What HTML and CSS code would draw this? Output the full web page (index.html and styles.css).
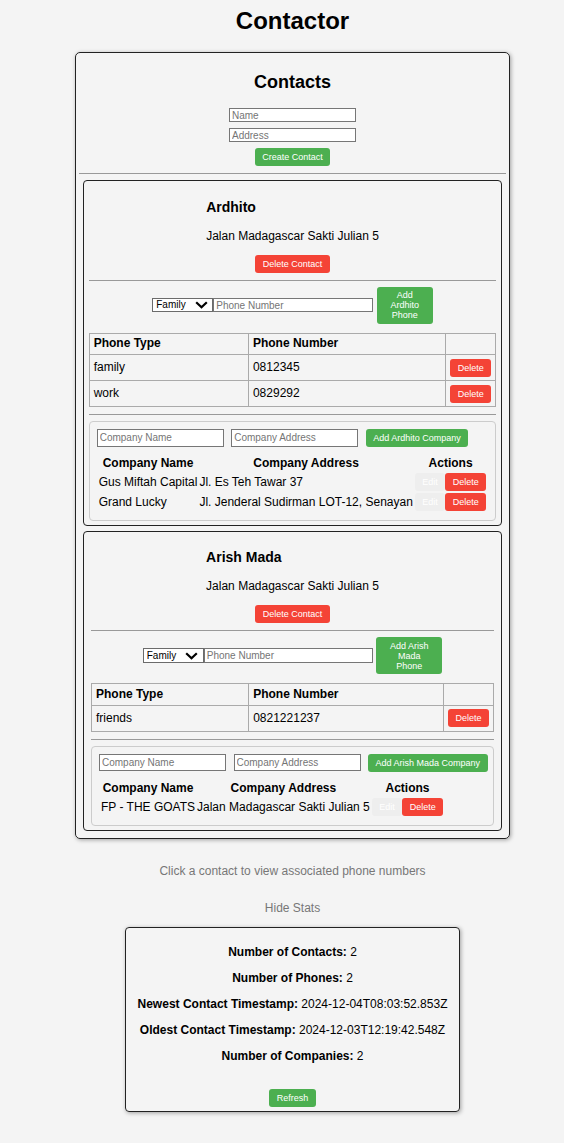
FILE: index.html
```html
<!DOCTYPE html>
<html lang="en">
<head>
<meta charset="utf-8">
<title>Contactor</title>
<link rel="stylesheet" href="styles.css">
</head>
<body>
<div class="app">
  <h1 class="title">Contactor</h1>

  <div class="panel">
    <h2 class="panel-title">Contacts</h2>
    <div class="create-form">
      <input class="field" type="text" placeholder="Name">
      <input class="field" type="text" placeholder="Address">
      <button class="btn btn-green">Create Contact</button>
    </div>
    <hr class="rule">

    <div class="contact-list">
      <div class="card">
        <div class="card-body">
          <div class="info">
            <h3 class="name">Ardhito</h3>
            <p class="address">Jalan Madagascar Sakti Julian 5</p>
          </div>
          <button class="btn btn-red btn-block">Delete Contact</button>
          <hr class="rule">
          <div class="phone-form phone-form-narrow">
            <span class="select-wrap">
              <select class="type-select"><option>Family</option><option>Work</option><option>Friends</option></select>
              <svg class="chevron" width="13" height="8" viewBox="0 0 13 8"><path d="M1.2 1.2 L6.5 6.3 L11.8 1.2" fill="none" stroke="#000" stroke-width="2.2"/></svg>
            </span>
            <input class="field phone-field" type="text" placeholder="Phone Number">
            <button class="btn btn-green phone-add">Add Ardhito Phone</button>
          </div>
          <table class="phones">
            <thead>
              <tr><th>Phone Type</th><th>Phone Number</th><th class="action-col"></th></tr>
            </thead>
            <tbody>
              <tr><td>family</td><td>0812345</td><td class="action-col"><button class="btn btn-red">Delete</button></td></tr>
              <tr><td>work</td><td>0829292</td><td class="action-col"><button class="btn btn-red">Delete</button></td></tr>
            </tbody>
          </table>
          <hr class="rule">
          <div class="companies">
            <div class="company-form">
              <input class="field company-field" type="text" placeholder="Company Name">
              <input class="field company-field" type="text" placeholder="Company Address">
              <button class="btn btn-green nowrap">Add Ardhito Company</button>
            </div>
            <table class="company-table">
              <thead>
                <tr><th>Company Name</th><th>Company Address</th><th>Actions</th></tr>
              </thead>
              <tbody>
                <tr><td>Gus Miftah Capital</td><td>Jl. Es Teh Tawar 37</td><td><div class="btn-pair"><button class="btn btn-muted">Edit</button><button class="btn btn-red">Delete</button></div></td></tr>
                <tr><td>Grand Lucky</td><td>Jl. Jenderal Sudirman LOT-12, Senayan</td><td><div class="btn-pair"><button class="btn btn-muted">Edit</button><button class="btn btn-red">Delete</button></div></td></tr>
              </tbody>
            </table>
          </div>
        </div>
      </div>

      <div class="card">
        <div class="card-body">
          <div class="info">
            <h3 class="name">Arish Mada</h3>
            <p class="address">Jalan Madagascar Sakti Julian 5</p>
          </div>
          <button class="btn btn-red btn-block">Delete Contact</button>
          <hr class="rule">
          <div class="phone-form phone-form-wide">
            <span class="select-wrap">
              <select class="type-select"><option>Family</option><option>Work</option><option>Friends</option></select>
              <svg class="chevron" width="13" height="8" viewBox="0 0 13 8"><path d="M1.2 1.2 L6.5 6.3 L11.8 1.2" fill="none" stroke="#000" stroke-width="2.2"/></svg>
            </span>
            <input class="field phone-field" type="text" placeholder="Phone Number">
            <button class="btn btn-green phone-add">Add Arish Mada Phone</button>
          </div>
          <table class="phones">
            <thead>
              <tr><th>Phone Type</th><th>Phone Number</th><th class="action-col"></th></tr>
            </thead>
            <tbody>
              <tr><td>friends</td><td>0821221237</td><td class="action-col"><button class="btn btn-red">Delete</button></td></tr>
            </tbody>
          </table>
          <hr class="rule">
          <div class="companies">
            <div class="company-form">
              <input class="field company-field" type="text" placeholder="Company Name">
              <input class="field company-field" type="text" placeholder="Company Address">
              <button class="btn btn-green nowrap">Add Arish Mada Company</button>
            </div>
            <table class="company-table">
              <thead>
                <tr><th>Company Name</th><th>Company Address</th><th>Actions</th></tr>
              </thead>
              <tbody>
                <tr><td>FP - THE GOATS</td><td>Jalan Madagascar Sakti Julian 5</td><td><div class="btn-pair"><button class="btn btn-muted">Edit</button><button class="btn btn-red">Delete</button></div></td></tr>
              </tbody>
            </table>
          </div>
        </div>
      </div>
    </div>
  </div>

  <p class="hint">Click a contact to view associated phone numbers</p>
  <button class="toggle">Hide Stats</button>

  <div class="stats">
    <p><strong>Number of Contacts:</strong> 2</p>
    <p><strong>Number of Phones:</strong> 2</p>
    <p><strong>Newest Contact Timestamp:</strong> 2024-12-04T08:03:52.853Z</p>
    <p><strong>Oldest Contact Timestamp:</strong> 2024-12-03T12:19:42.548Z</p>
    <p><strong>Number of Companies:</strong> 2</p>
    <div class="stats-actions"><button class="btn btn-green">Refresh</button></div>
  </div>
</div>
</body>
</html>
```

FILE: styles.css
```css
* {
  box-sizing: border-box;
}

body {
  margin: 0;
  background: #f4f4f4;
  font-family: "Liberation Sans", Arial, sans-serif;
  color: #000;
}

.app {
  padding: 0 0 30px 21px;
  text-align: center;
}

.title {
  font-size: 24px;
  line-height: 28px;
  font-weight: bold;
  margin: 7px 0 17px;
}

/* main panel */
.panel {
  width: 435px;
  margin: 0 auto;
  border: 1px solid #222;
  border-radius: 5px;
  box-shadow: 1px 1px 4px rgba(0, 0, 0, 0.35);
  padding: 4px 3px 7px;
}

.panel-title {
  font-size: 18px;
  line-height: 21px;
  font-weight: bold;
  margin: 15px 0;
}

.create-form {
  display: flex;
  flex-direction: column;
  align-items: center;
  gap: 6px;
}

.field {
  font: 10px "Liberation Sans", Arial, sans-serif;
  color: #000;
  background: #fff;
  border: 1px solid #767676;
  border-radius: 0;
  padding: 0 2px;
  height: 14px;
  width: 127px;
  outline: none;
}

.field::placeholder {
  color: #757575;
}

.btn {
  font: 9px/10px "Liberation Sans", Arial, sans-serif;
  color: #fff;
  border: 0;
  border-radius: 3px;
  padding: 4px 7.5px;
  cursor: pointer;
}

.btn-green {
  background: #4caf50;
}

.btn-red {
  background: #f44336;
}

.btn-muted {
  background: #eeeeee;
}

.btn-block {
  display: block;
  margin: 0 auto;
}

.nowrap {
  white-space: nowrap;
  flex-shrink: 0;
}

.rule {
  border: 0;
  border-top: 1px solid #999;
  height: 0;
  margin: 7px 0 6px;
}

/* contact cards */
.contact-list {
  display: flex;
  flex-direction: column;
  gap: 4.5px;
  margin: 0 4px;
}

.card {
  display: flex;
  justify-content: center;
  border: 1px solid #222;
  border-radius: 4px;
  padding: 7px 7px 4px;
}

.card-body {
  flex: 1 1 0;
}

.info {
  width: fit-content;
  margin: 0 auto;
  text-align: left;
}

.name {
  font-size: 14px;
  line-height: 16px;
  font-weight: bold;
  margin: 10.5px 0 14px;
}

.address {
  font-size: 12px;
  line-height: 14px;
  margin: 0 0 12px;
}

/* phone form */
.phone-form {
  display: flex;
  justify-content: center;
  align-items: center;
  margin: 1px 0 9px;
}

.select-wrap {
  position: relative;
  display: inline-flex;
}

.type-select {
  appearance: none;
  -webkit-appearance: none;
  font: 10px "Liberation Sans", Arial, sans-serif;
  color: #000;
  background: #fff;
  border: 1px solid #6b6b6b;
  border-radius: 0;
  width: 61px;
  height: 14.5px;
  padding: 0 0 0 3px;
  line-height: 12px;
  outline: none;
}

.chevron {
  position: absolute;
  right: 5.5px;
  top: 3.5px;
  pointer-events: none;
}

.phone-field {
  height: 14.5px;
}

.phone-add {
  margin-left: 3.5px;
  padding-top: 3.5px;
  padding-bottom: 3.5px;
  flex-shrink: 0;
}

.phone-form-narrow .phone-field {
  width: 160px;
}

.phone-form-narrow .phone-add {
  width: 56px;
}

.phone-form-wide .phone-field {
  width: 169px;
}

.phone-form-wide .phone-add {
  width: 66px;
}

/* phone table */
.phones {
  width: 100%;
  border-collapse: collapse;
  font-size: 12px;
  line-height: 13px;
}

.phones th,
.phones td {
  border: 1px solid #aaa;
  padding: 3.5px 4px;
  text-align: left;
}

.phones th {
  font-weight: bold;
  padding-top: 3.75px;
  padding-bottom: 3.75px;
}

.phones .action-col {
  width: 1%;
  white-space: nowrap;
}

.phones .action-col .btn {
  display: block;
}

/* companies */
.companies {
  margin-top: 3px;
  border: 1px solid #ccc;
  border-radius: 4px;
  padding: 7px;
}

.company-form {
  display: flex;
  gap: 7.5px;
  contain: inline-size;
}

.company-field {
  height: 17.5px;
  flex-shrink: 0;
}

.company-table {
  margin-top: 7px;
  border-spacing: 2px;
  font-size: 12px;
  line-height: 14px;
}

.company-table th {
  padding: 0;
  line-height: 15px;
  font-weight: bold;
  text-align: center;
}

.company-table td {
  padding: 0;
  text-align: left;
  white-space: nowrap;
}

.btn-pair {
  display: flex;
}

/* footer / stats */
.hint {
  color: #777;
  font-size: 12px;
  line-height: 14px;
  margin: 25px 0 0;
}

.toggle {
  display: block;
  margin: 23.5px auto 0;
  padding: 0;
  background: none;
  border: 0;
  color: #777;
  font: 12px/14px "Liberation Sans", Arial, sans-serif;
  cursor: pointer;
}

.stats {
  width: fit-content;
  margin: 12px auto 0;
  border: 1px solid #222;
  border-radius: 4px;
  box-shadow: 1px 1px 4px rgba(0, 0, 0, 0.35);
  padding: 5px 12px 4px;
  font-size: 12px;
  line-height: 14px;
}

.stats p {
  margin: 12px 0;
}

.stats-actions {
  padding-top: 13.5px;
}
```
